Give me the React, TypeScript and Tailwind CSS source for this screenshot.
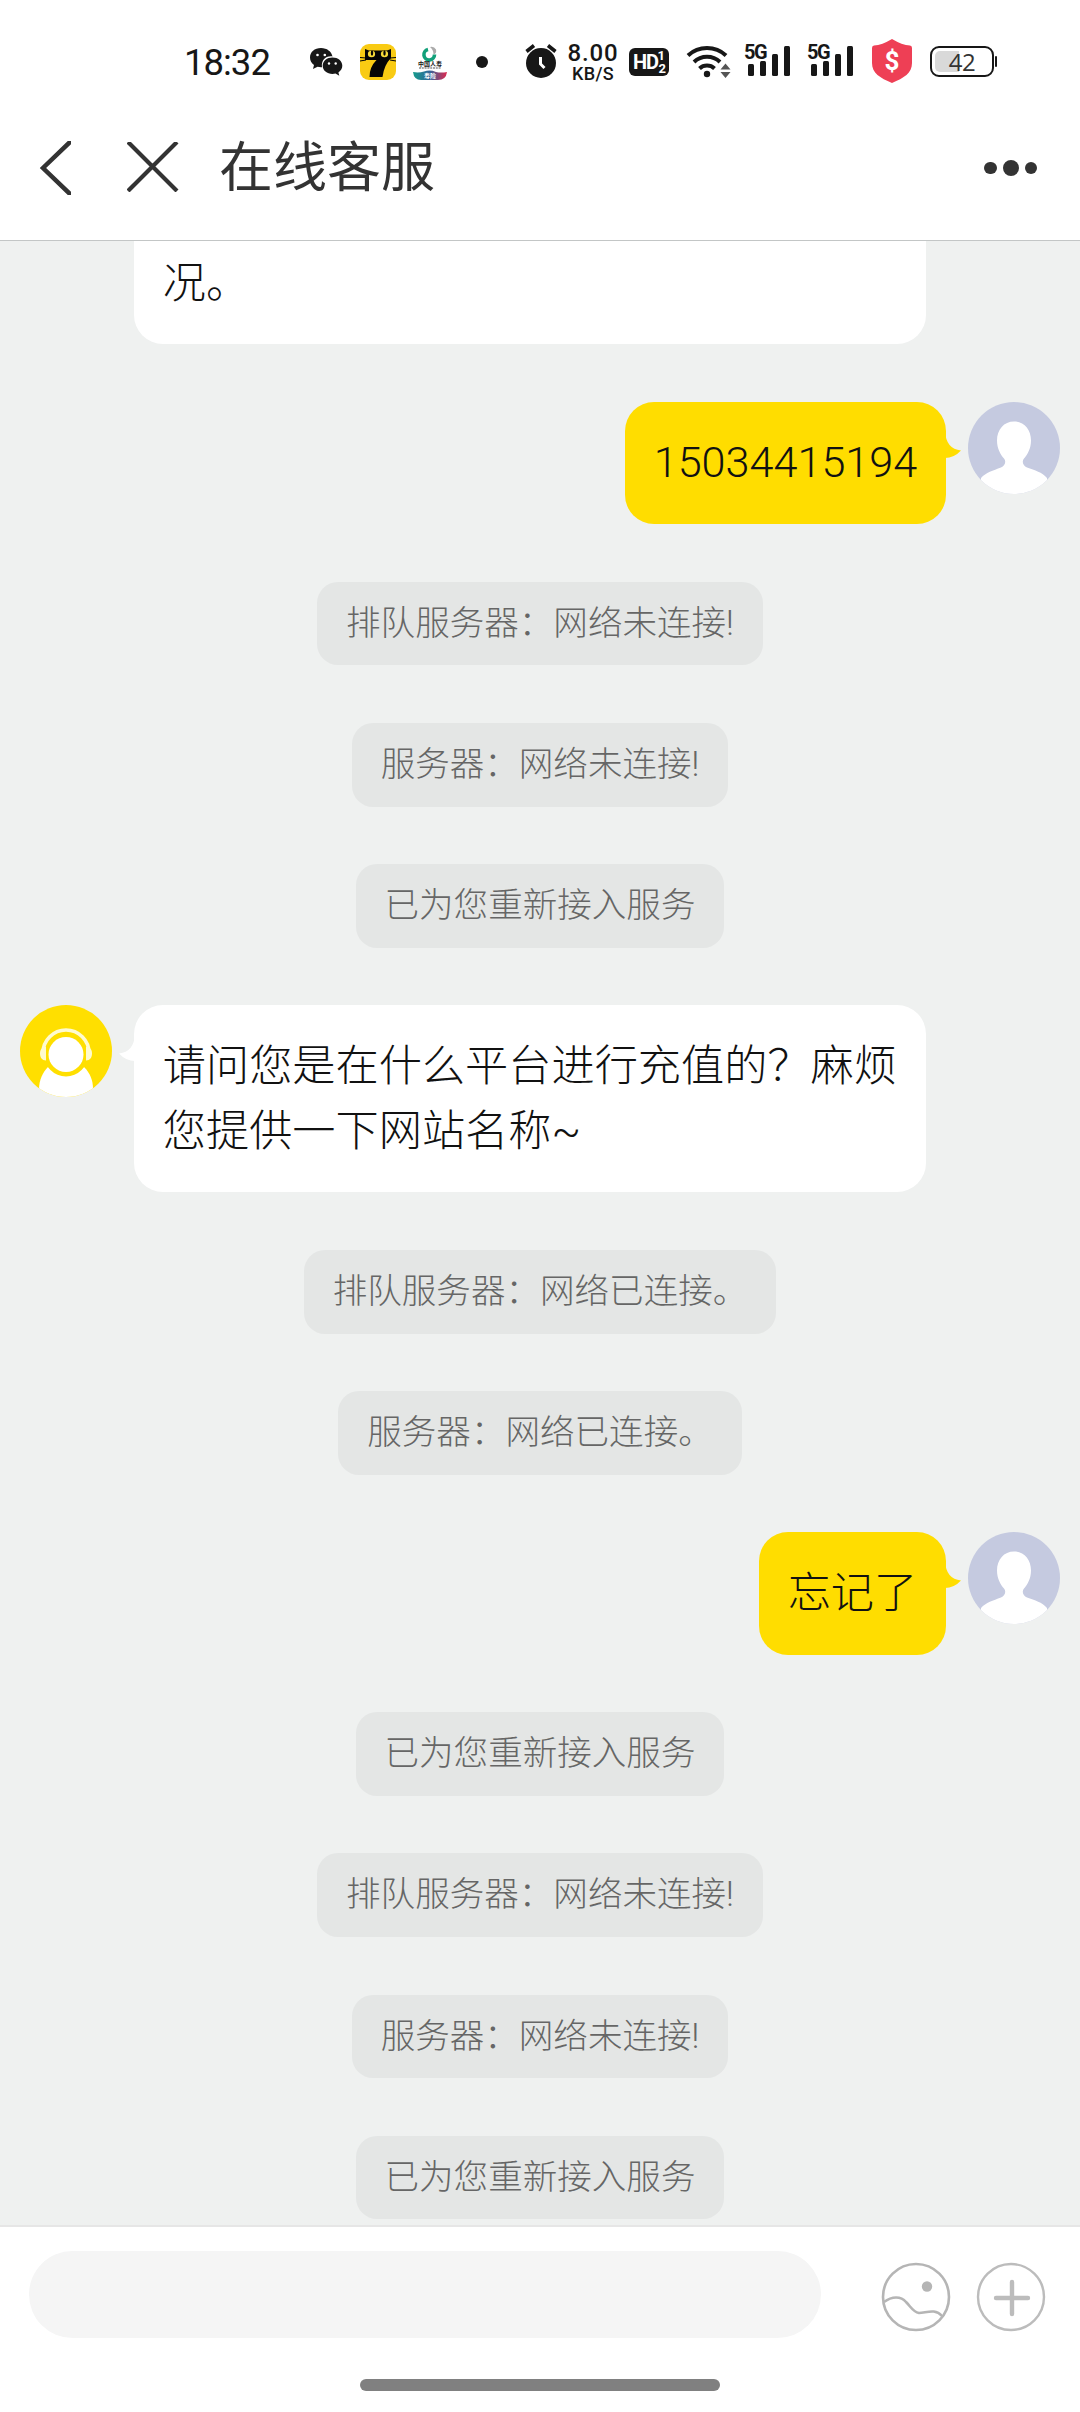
import { Fragment } from "react";

type Message = { kind: "system" | "agent" | "user"; text: string };

const MESSAGES: Message[] = [
    { kind: "user", text: "15034415194" },
    { kind: "system", text: "排队服务器：网络未连接!" },
    { kind: "system", text: "服务器：网络未连接!" },
    { kind: "system", text: "已为您重新接入服务" },
    { kind: "agent", text: "请问您是在什么平台进行充值的？麻烦您提供一下网站名称~" },
    { kind: "system", text: "排队服务器：网络已连接。" },
    { kind: "system", text: "服务器：网络已连接。" },
    { kind: "user", text: "忘记了" },
    { kind: "system", text: "已为您重新接入服务" },
    { kind: "system", text: "排队服务器：网络未连接!" },
    { kind: "system", text: "服务器：网络未连接!" },
    { kind: "system", text: "已为您重新接入服务" }
];

function Signal() {
    return (
        <div className="relative w-[48px] h-[34px]">
            <svg viewBox="0 0 48 34" className="w-[48px] h-[34px]" fill="#171717">
                <rect x="4" y="21" width="6" height="12" rx="1.5" />
                <rect x="16" y="18" width="6" height="15" rx="1.5" />
                <rect x="28" y="11" width="6" height="22" rx="1.5" />
                <rect x="40" y="3" width="6" height="30" rx="1.5" />
            </svg>
            <span className="absolute left-0 top-0 font-[Roboto] font-bold text-[20px] leading-[18px] tracking-[-1.500px]">5G</span>
        </div>
    );
}

function StatusBar() {
    return (
        <div className="h-[120px] pl-[184px] flex items-start text-[#171717]">
            <span className="w-[90px] mt-[42px] font-[Roboto] text-[36.500px] leading-[42px] tracking-[-1px]">18:32</span>

            {/* wechat */}
            <svg viewBox="0 0 34 30" className="w-[34px] h-[30px] mt-[47px] ml-[35px]" fill="#171717">
                <path d="M12 1C5.500 1 1 5 1 10.500c0 3 1.500 5.500 4 7.500l-1 4 4.500-2.300c1.200.3 2.300.5 3.500.5h1C12 13 17 8.500 23.500 9.500 22.500 4.500 18 1 12 1z" />
                <path d="M23.500 10.500c-5.500 0-9.800 3.500-9.800 8.200s4.300 8.200 9.800 8.200c1 0 2-.1 3-.4l3.800 2.300-.9-3.400c2.400-1.600 3.900-4 3.900-6.700 0-4.700-4.300-8.200-9.800-8.200z" />
                <g fill="#fff">
                    <circle cx="8.500" cy="8" r="1.300" />
                    <circle cx="15.800" cy="8" r="1.300" />
                    <circle cx="20" cy="16.500" r="1.200" />
                    <circle cx="26.700" cy="16.500" r="1.200" />
                </g>
            </svg>

            {/* seven cat */}
            <svg viewBox="0 0 36 36" className="w-[36px] h-[36px] mt-[44px] ml-[17px]">
                <rect width="36" height="36" rx="9" fill="#f9cb13" />
                <path d="M5 5l4 1.500h18L31 5v9q-7 7-8.500 19H9.500q0-10 7-17H5z" fill="#050505" />
                <path d="M0 13.500l6 .5M0 17l6-1M36 13.500l-6 .5M36 17l-6-1" stroke="#050505" strokeWidth="1" />
                <ellipse cx="11.500" cy="10" rx="3.600" ry="3.200" fill="#f9dc3a" />
                <ellipse cx="24.500" cy="10" rx="3.600" ry="3.200" fill="#f9dc3a" />
                <ellipse cx="12" cy="9" rx="1.200" ry="2.800" fill="#050505" />
                <ellipse cx="24.500" cy="9" rx="1.200" ry="2.800" fill="#050505" />
            </svg>

            {/* china life */}
            <div className="relative w-[36px] h-[34px] mt-[46px] ml-[16px]">
                <svg viewBox="0 0 36 34" className="w-[36px] h-[34px]">
                    <defs>
                        <linearGradient id="wave">
                            <stop offset="0" stopColor="#159c8c" />
                            <stop offset=".5" stopColor="#35659a" />
                            <stop offset="1" stopColor="#e0284f" />
                        </linearGradient>
                    </defs>
                    <path d="M16 3.500a5.300 5.300 0 1 0 6.500 5" fill="none" stroke="#12a07a" strokeWidth="3.600" />
                    <path d="M18 1q4-1 6 2.500 1 4-2.500 5 0-5-3.500-7.500z" fill="#aaa" />
                    <path d="M7 22h22" stroke="#555" strokeWidth="1.200" strokeDasharray="2 .8" />
                    <path d="M1 26q6 1 11-.5 6-2 12 .5 5 1 11 0-1 8-9 8H9q-7 0-8-8z" fill="url(#wave)" />
                </svg>
                <span className="absolute left-[6px] top-[14px] w-[24px] text-center font-['Noto_Sans_CJK_SC'] font-bold text-[6px] leading-[7px]">中国人寿</span>
                <span className="absolute left-[12px] top-[26px] font-['Noto_Sans_CJK_SC'] font-bold text-[6px] leading-[7px] text-white">寿险</span>
            </div>

            <div className="size-[12px] rounded-full bg-[#171717] mt-[56px] ml-[28px]" />

            {/* alarm */}
            <svg viewBox="0 0 32 36" className="w-[32px] h-[36px] mt-[43px] ml-[37px]">
                <circle cx="16" cy="20" r="15" fill="#171717" />
                <path d="M1.500 8.500L9 2.500M30.500 8.500L23 2.500" stroke="#171717" strokeWidth="3.600" />
                <path d="M15.500 14v7l4 4" stroke="#fff" strokeWidth="3" fill="none" />
            </svg>

            <div className="w-[52px] ml-[10px] mt-[43px] flex flex-col items-center font-[Roboto] font-medium">
                <span className="text-[24px] leading-[21px] tracking-[0.800px]">8.00</span>
                <span className="text-[18px] leading-[19px] tracking-[0.300px]">KB/S</span>
            </div>

            <div className="relative w-[40px] h-[28px] ml-[10px] mt-[48px] rounded-[6px] bg-[#171717] text-white font-[Roboto] font-bold">
                <span className="absolute left-[4px] top-[4px] text-[20px] leading-[20px] tracking-[-1.200px]">HD</span>
                <span className="absolute right-[4px] top-[1px] text-[13px] leading-[13px]">1</span>
                <span className="absolute right-[3px] top-[14px] text-[13px] leading-[13px]">2</span>
            </div>

            <svg viewBox="0 0 46 36" className="w-[46px] h-[36px] ml-[17px] mt-[42px]" fill="none" stroke="#171717" strokeWidth="4">
                <path d="M2 13.500a28 28 0 0 1 38 0" />
                <path d="M8 20a19 19 0 0 1 26 0" />
                <path d="M13.500 26.500a11 11 0 0 1 15 0" />
                <circle cx="21" cy="32" r="3.200" fill="#171717" stroke="none" />
                <path d="M34.500 27.500l5-6 5 6zM34.500 30l5 6 5-6z" fill="#555" stroke="none" />
            </svg>

            <div className="flex gap-[15px] ml-[12px] mt-[43px]">
                <Signal />
                <Signal />
            </div>

            <div className="relative ml-[17px] mt-[39px] w-[40px] h-[44px]">
                <svg viewBox="0 0 40 44" className="w-[40px] h-[44px]">
                    <path d="M20 0Q30 6 38 6.500q2 .3 2 2.500v15c0 10-8 15-20 20C8 39 0 34 0 24V9q0-2.200 2-2.500Q10 6 20 0z" fill="#ee3f55" />
                </svg>
                <span className="absolute inset-x-0 top-[7px] text-center font-[Roboto] font-bold text-[26px] leading-[30px] text-white">$</span>
            </div>

            <div className="flex items-center ml-[18px] mt-[46px]">
                <div className="relative w-[64px] h-[31px] rounded-[9px] border-[2.500px] border-[#171717]">
                    <div className="absolute left-[3px] top-[3px] w-[24px] h-[21px] rounded-l-[5px] bg-[#d9d9d9]" />
                    <span className="absolute inset-0 text-center font-['Open_Sans'] text-[24px] leading-[27px] tracking-[-0.5px] text-[#333]">42</span>
                </div>
                <div className="w-[2px] h-[11px] ml-[1px] rounded bg-[#171717]" />
            </div>
        </div>
    );
}

function Header() {
    return (
        <div className="h-[120px] flex items-start text-[#333]">
            <svg viewBox="0 0 32 54" className="w-[32px] h-[54px] ml-[39px] mt-[21px]" fill="none" stroke="#333" strokeWidth="4.500">
                <path d="M32 0L4 27l28 27" />
            </svg>
            <svg viewBox="0 0 52 50" className="w-[52px] h-[50px] ml-[56px] mt-[22px]" fill="none" stroke="#333" strokeWidth="4.200">
                <path d="M1 0l49 49M50 0L1 49" />
            </svg>
            <h1 className="ml-[40px] mt-[13px] text-[54px] leading-[72px] font-normal">在线客服</h1>
            <div className="ml-auto mr-[43px] mt-[40px] flex items-center gap-[6px]">
                <i className="size-[12.500px] rounded-full bg-[#333]" />
                <i className="size-[16px] rounded-full bg-[#333]" />
                <i className="size-[12.500px] rounded-full bg-[#333]" />
            </div>
        </div>
    );
}

function UserAvatar() {
    return (
        <svg viewBox="0 0 92 92" className="size-[92px] shrink-0 rounded-full bg-[#c5cae0]" fill="#fff">
            <path d="M46 19.500c-10 0-17 8-17 19 0 8 3.500 14 7 18 2.500 3 1 7-3 9-8 3-15 5-20 10.500V92h66V76c-5-6-12-7.500-20-10.500-4-2-5.500-6-3-9 3.500-4 7-10 7-18 0-11-7-19-17-19z" />
        </svg>
    );
}

function AgentAvatar() {
    return (
        <svg viewBox="0 0 92 92" className="size-[92px] shrink-0 rounded-full bg-[#ffdf00]">
            <path d="M19 92V84c0-9 4-17 9-22h36c6 6 9 13 9 22v8z" fill="#fff" />
            <circle cx="46" cy="49.500" r="22" fill="#ffdf00" />
            <circle cx="46" cy="49.500" r="17.500" fill="#fff" />
            <path d="M23 48a23 23 0 0 1 46 0" fill="none" stroke="#fffbd0" strokeWidth="3.600" />
            <path d="M26 42v13.500c-4 0-6-3-6-7s2-6.500 6-6.500zM66 42v13.500c4 0 6-3 6-7s-2-6.500-6-6.500z" fill="#fffbd0" />
        </svg>
    );
}

function Bubble({ message }: { message: Message }) {
    if (message.kind === "system") {
        return (
            <div className="self-center rounded-[21px] bg-[#e4e6e5] px-[28.800px] pt-[16px] pb-[15.700px] text-[34.560px] leading-[51.840px] text-[#666] font-light">
                {message.text}
            </div>
        );
    }

    if (message.kind === "user") {
        return (
            <div className="flex justify-end gap-[22px] pr-[20px]">
                <div className="relative rounded-[29px] bg-[#ffdd00] px-[28.800px] pt-[29.600px] pb-[28px] text-[43.200px] leading-[64.800px] text-[#111] font-light">
                    {message.text}
                    <svg viewBox="0 0 16 28" className="absolute left-full top-[29px] w-[16px] h-[28px] -ml-px" fill="#ffdd00">
                        <path d="M0 0q1 18 16 19.500Q9 27 0 27z" />
                    </svg>
                </div>
                <UserAvatar />
            </div>
        );
    }

    return (
        <div className="flex gap-[22px] pl-[20px]">
            <AgentAvatar />
            <div className="relative w-[792px] rounded-[29px] bg-white px-[28.800px] pt-[30.200px] pb-[27.400px] text-[43.200px] leading-[64.800px] text-[#111] font-light">
                {message.text}
                <svg viewBox="0 0 16 28" className="absolute right-full top-[29px] w-[16px] h-[28px] -mr-px" fill="#fff">
                    <path d="M16 0Q15 18 0 19.500 7 27 16 27z" />
                </svg>
            </div>
        </div>
    );
}

export default function App() {
    return (
        <div className="w-[1080px] h-[2412px] flex flex-col overflow-hidden bg-white font-[Roboto,'Noto_Sans_CJK_SC',sans-serif]">
            <StatusBar />
            <Header />

            <main className="flex-1 min-h-0 overflow-hidden border-t border-[#c3c6c6] bg-[#eff1f0] flex flex-col gap-[57.600px]">
                <div className="ml-[134px] w-[792px] h-[103.300px] shrink-0 rounded-b-[29px] bg-white px-[28.800px] pt-[11.400px] text-[43.200px] leading-[64.800px] text-[#111] font-light">
                    况。
                </div>
                {MESSAGES.map((message, i) => (
                    <Fragment key={i}>
                        <Bubble message={message} />
                    </Fragment>
                ))}
            </main>

            <footer className="h-[187px] border-t-2 border-[#e6e6e6] flex flex-col">
                <div className="flex items-start pt-[24px] pl-[29px]">
                    <div className="w-[792px] h-[87px] rounded-full bg-[#f5f5f5]" />
                    <svg viewBox="0 0 70 70" className="size-[70px] ml-[60px] mt-[11px]" fill="none" stroke="#b5b5b5" strokeWidth="2.600">
                        <circle cx="35" cy="35" r="33" />
                        <path d="M3 40c8-6 17-6 22 0 5 5 7 10 13 11 7 0 16-5 23 3" />
                        <circle cx="46" cy="24.500" r="5.200" fill="#b5b5b5" stroke="none" />
                    </svg>
                    <svg viewBox="0 0 70 70" className="size-[70px] ml-[25px] mt-[11px]" fill="none" stroke="#bcbcbc" strokeWidth="2.400">
                        <circle cx="35" cy="35" r="33" />
                        <path d="M36 20v32M20 36h32" strokeWidth="4.400" strokeLinecap="round" />
                    </svg>
                </div>
                <div className="mt-auto mb-[21px] self-center w-[360px] h-[12px] rounded-full bg-[#808080]" />
            </footer>
        </div>
    );
}
